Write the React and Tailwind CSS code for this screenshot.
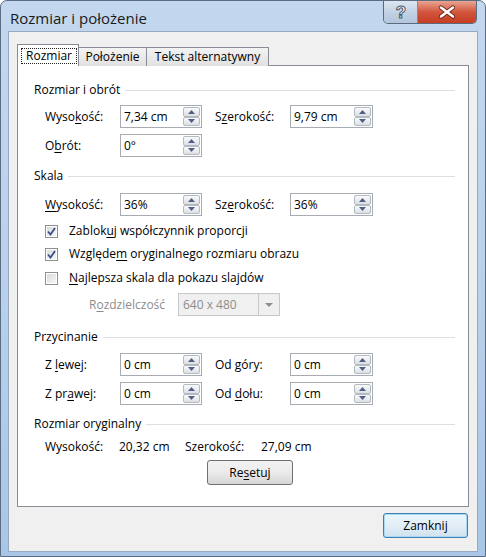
import React from "react";

const SpinBtn = ({ up }) => (
  <div className="flex-1 flex items-center justify-center border border-[#b4bac2] rounded-[2px] bg-linear-to-b from-[#fafafa] to-[#dcdfe3]">
    <svg width="7" height="4" viewBox="0 0 7 4">
      {up ? (
        <path d="M0 4 L3.5 0 L7 4 Z" fill="#4e6089" />
      ) : (
        <path d="M0 0 L3.5 4 L7 0 Z" fill="#4e6089" />
      )}
    </svg>
  </div>
);

const Spin = ({ value, className }) => (
  <div className={`flex h-[23px] border border-[#a9abb2] bg-white ${className}`}>
    <div className="flex-1 flex items-center pl-[3px]">{value}</div>
    <div className="flex flex-col w-[17px] my-[1px] mr-[1px]">
      <SpinBtn up />
      <SpinBtn />
    </div>
  </div>
);

const Header = ({ children, className = "" }) => (
  <div className={`flex items-center h-[16px] pl-[16px] pr-[13px] ${className}`}>
    <span>{children}</span>
    <div className="flex-1 h-px bg-[#dcdfe3] ml-[5px]" />
  </div>
);

const Row = ({ l1, v1, l2, v2, className = "" }) => (
  <div className={`flex items-center pl-[27px] ${className}`}>
    <div className="w-[75px]">{l1}</div>
    <Spin value={v1} className="w-[82px]" />
    <div className="w-[88px] pl-[13px]">{l2}</div>
    <Spin value={v2} className="w-[83px]" />
  </div>
);

const Check = ({ checked, children, className = "" }) => (
  <div className={`flex items-center h-[16px] pl-[27px] ${className}`}>
    <div className="w-[13px] h-[13px] border border-[#8e8f8f] bg-white p-[1px]">
      <div className="w-full h-full bg-linear-to-br from-[#d9dadb] to-[#f6f6f6] flex items-center justify-center">
        {checked && (
          <svg width="9" height="9" viewBox="0 0 9 9">
            <path d="M1 4.5 L3.5 7.5 L8 1" stroke="#3d4f8a" strokeWidth="1.8" fill="none" />
          </svg>
        )}
      </div>
    </div>
    <span className="ml-[11px]">{children}</span>
  </div>
);

const U = ({ children }) => <u className="underline underline-offset-[2px]">{children}</u>;

export default function App() {
  return (
    <div className="w-[486px] h-[557px] flex flex-col rounded-t-[7px] border border-[#5a6d82] bg-linear-to-b from-[#c3d8ef] via-[#b9d1ec] to-[#a9c6e6] font-['Open_Sans',sans-serif] text-[12px] text-black overflow-hidden">
      {/* title bar */}
      <div className="flex h-[30px] shrink-0">
        <div className="pl-[9px] pt-[6px] text-[15px] leading-[22px] text-[#1a1a1a]">Rozmiar i położenie</div>
        <div className="ml-auto mr-[8px] flex h-[23px] border border-t-0 border-[#5b6b7e] rounded-b-[5px] overflow-hidden">
          <div className="w-[34px] flex items-center justify-center bg-linear-to-b from-[#dde7f3] via-[#c3d2e4] to-[#b2c5dc] border-r border-[#7d8ea3]">
            <svg width="14" height="18" viewBox="0 0 14 18">
              <text x="7" y="15" textAnchor="middle" fontSize="17" fontWeight="bold" fontFamily="Liberation Sans, sans-serif" fill="#ffffff" stroke="#4b5a6c" strokeWidth="1">?</text>
            </svg>
          </div>
          <div className="w-[58px] flex items-center justify-center bg-linear-to-b from-[#e8a493] via-[#d2553d] to-[#c63c22]">
            <svg width="18" height="14" viewBox="0 0 18 14">
              <path d="M3 2.5 L15 11.5 M15 2.5 L3 11.5" stroke="#6b2418" strokeWidth="4.2" strokeLinecap="round" />
              <path d="M3 2.5 L15 11.5 M15 2.5 L3 11.5" stroke="#ffffff" strokeWidth="2.6" strokeLinecap="round" />
            </svg>
          </div>
        </div>
      </div>

      {/* client area */}
      <div className="mx-[7px] mb-[4px] flex-1 bg-[#f0f0f0] border border-[#98aabf] flex flex-col pl-[8px] pr-[9px] pt-[12px]">
        {/* tabs */}
        <div className="flex items-end h-[22px] relative z-10">
          <div className="h-[22px] w-[62px] bg-white border border-b-0 border-[#898c95] flex pl-[3px] pr-[1px] pt-[3px] pb-[2px]">
            <span className="flex-1 flex items-center justify-center border border-dotted border-[#222]">Rozmiar</span>
          </div>
          <div className="h-[19px] w-[68px] border border-l-0 border-b-0 border-[#898c95] bg-linear-to-b from-[#f3f3f3] to-[#e1e1e1] flex items-center justify-center">
            Położenie
          </div>
          <div className="h-[19px] w-[122px] border border-l-0 border-b-0 border-[#898c95] bg-linear-to-b from-[#f3f3f3] to-[#e1e1e1] flex items-center justify-center">
            Tekst alternatywny
          </div>
        </div>

        {/* panel */}
        <div className="w-[452px] h-[442px] -mt-px bg-white border border-[#898c95] flex flex-col pt-[16px]">
          <Header>Rozmiar i obrót</Header>
          <Row
            className="mt-[7px]"
            l1={<>Wyso<U>k</U>ość:</>}
            v1="7,34 cm"
            l2={<>S<U>z</U>erokość:</>}
            v2="9,79 cm"
          />
          <div className="flex items-center pl-[27px] mt-[6px]">
            <div className="w-[75px]">O<U>b</U>rót:</div>
            <Spin value="0°" className="w-[82px]" />
          </div>

          <Header className="mt-[11px]">Skala</Header>
          <Row
            className="mt-[9px]"
            l1={<><U>W</U>ysokość:</>}
            v1="36%"
            l2={<>Sz<U>e</U>rokość:</>}
            v2="36%"
          />
          <Check checked className="mt-[7px]">Zablok<U>u</U>j współczynnik proporcji</Check>
          <Check checked className="mt-[7px]">Względe<U>m</U> oryginalnego rozmiaru obrazu</Check>
          <Check className="mt-[8px]"><U>N</U>ajlepsza skala dla pokazu slajdów</Check>
          <div className="flex items-center pl-[71px] mt-[7px]">
            <div className="w-[89px] text-[#8d8d8d]">R<U>o</U>zdzielczość</div>
            <div className="w-[102px] h-[23px] flex border border-[#c5c8cc] bg-[#f0f0f0] text-[#8d8d8d]">
              <div className="flex-1 flex items-center pl-[4px]">640 x 480</div>
              <div className="w-[21px] border-l border-[#c5c8cc] flex items-center justify-center">
                <svg width="8" height="4" viewBox="0 0 8 4">
                  <path d="M0 0 L4 4 L8 0 Z" fill="#8d8f93" />
                </svg>
              </div>
            </div>
          </div>

          <Header className="mt-[13px]">Przycinanie</Header>
          <Row
            className="mt-[8px]"
            l1={<>Z <U>l</U>ewej:</>}
            v1="0 cm"
            l2={<>Od <U>g</U>óry:</>}
            v2="0 cm"
          />
          <Row
            className="mt-[6px]"
            l1={<>Z pr<U>a</U>wej:</>}
            v1="0 cm"
            l2={<>Od <U>d</U>ołu:</>}
            v2="0 cm"
          />

          <Header className="mt-[11px]">Rozmiar oryginalny</Header>
          <div className="flex items-center h-[16px] pl-[27px] mt-[7px]">
            <span className="w-[74px]">Wysokość:</span>
            <span className="w-[66px]">20,32 cm</span>
            <span className="w-[76px]">Szerokość:</span>
            <span>27,09 cm</span>
          </div>
          <button className="ml-[189px] mt-[5px] w-[86px] h-[25px] rounded-[3px] border border-[#707070] bg-linear-to-b from-[#f2f2f2] via-[#ebebeb] to-[#d6d6d6]">
            Re<U>s</U>etuj
          </button>
        </div>

        <div className="flex justify-end mt-[6px]">
          <button className="w-[85px] h-[25px] rounded-[3px] border border-[#3c7fb1] bg-linear-to-b from-[#eaf6fd] via-[#e3eef6] to-[#cfe2ee] shadow-[inset_0_0_0_1px_#a8d8f2]">
            Zamknij
          </button>
        </div>
      </div>
    </div>
  );
}
